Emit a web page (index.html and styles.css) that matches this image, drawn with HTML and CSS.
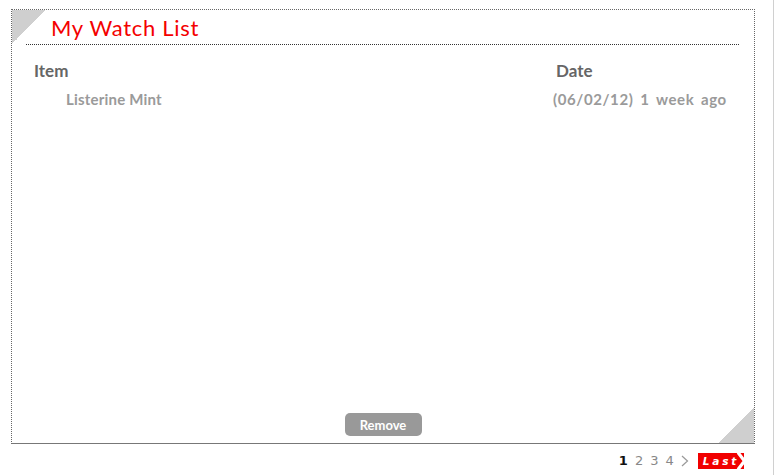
FILE: index.html
```html
<!DOCTYPE html>
<html lang="en">
<head>
<meta charset="utf-8">
<title>My Watch List</title>
<link rel="stylesheet" href="styles.css">
</head>
<body>
<div class="page">
  <section class="panel">
    <header class="panel-head">
      <h1 class="panel-title">My Watch List</h1>
    </header>
    <div class="list">
      <div class="list-row list-head">
        <span class="col-item">Item</span>
        <span class="col-date">Date</span>
      </div>
      <div class="list-row list-entry">
        <span class="col-item">Listerine Mint</span>
        <span class="col-date">(06/02/12) 1 week ago</span>
      </div>
    </div>
    <div class="actions">
      <button class="btn-remove" type="button">Remove</button>
    </div>
  </section>
  <nav class="pager">
    <span class="pg pg-current">1</span>
    <span class="pg">2</span>
    <span class="pg">3</span>
    <span class="pg">4</span>
    <svg class="pg-next" width="8" height="12" viewBox="0 0 8 12"><polyline points="1,1 6.5,6 1,11" fill="none" stroke="#999" stroke-width="1.2"/></svg>
    <span class="pg-last"><span class="pg-last-text">Last</span><svg class="pg-chev" width="11" height="18" viewBox="0 0 11 18"><polyline points="2,0.5 8.5,9 2,17.5" fill="none" stroke="#fff" stroke-width="3.2"/></svg></span>
  </nav>
</div>
</body>
</html>
```

FILE: styles.css
```css
html, body {
  margin: 0;
  padding: 0;
  background: #fff;
}

.page {
  width: 774px;
  height: 475px;
  border-right: 1px solid #d0d0d0;
  box-sizing: border-box;
  padding: 9px 0 0 11px;
  display: flex;
  flex-direction: column;
}

.panel {
  width: 744px;
  height: 435px;
  box-sizing: border-box;
  border: 1px dotted #666;
  border-bottom: 1px solid #777;
  display: flex;
  flex-direction: column;
  background:
    linear-gradient(to bottom right, #cfcfcf 50%, transparent 50%) left top / 34px 34px no-repeat,
    linear-gradient(to top left, #cfcfcf 50%, transparent 50%) right bottom / 35px 36px no-repeat,
    #fff;
}

.panel-head {
  margin: 0 15px 0 14px;
  height: 34px;
  border-bottom: 1px dotted #333;
  display: flex;
  align-items: center;
}

.panel-title {
  margin: 0 0 0 25px;
  font-family: "Lato", "DejaVu Sans", sans-serif;
  font-weight: 400;
  font-size: 22px;
  letter-spacing: 0.7px;
  color: #f40000;
  line-height: 1;
  padding-top: 1px;
}

.list {
  flex: 1;
  padding: 15px 24px 0 22px;
  font-family: "Lato", "Open Sans", sans-serif;
}

.list-row {
  display: grid;
  grid-template-columns: 1fr 177px;
  align-items: center;
}

.list-head {
  height: 20px;
  font-size: 17px;
  font-weight: 700;
  color: #666;
}

.list-entry {
  height: 20px;
  margin-top: 9px;
  font-size: 15px;
  font-weight: 700;
  color: #9a9a9a;
}

.list-head .col-date {
  padding-left: 3px;
}

.list-entry .col-item {
  padding-left: 32px;
  letter-spacing: 0.2px;
}

.list-entry .col-date {
  letter-spacing: 0.6px;
  word-spacing: 2.5px;
  white-space: nowrap;
}

.actions {
  display: flex;
  justify-content: center;
  padding-bottom: 7px;
}

.btn-remove {
  width: 77px;
  height: 23px;
  border: 0;
  border-radius: 5px;
  background: #999;
  color: #fff;
  font-family: "Lato", "Open Sans", sans-serif;
  font-weight: 700;
  font-size: 13px;
  padding: 0;
}

.pager {
  width: 736px;
  margin-top: 9px;
  display: flex;
  justify-content: flex-end;
  align-items: center;
  font-family: "DejaVu Sans", sans-serif;
  font-size: 13px;
  color: #888;
  gap: 7px;
}

.pg {
  line-height: 16px;
}

.pg-current {
  color: #111;
  font-weight: 700;
}

.pg-next {
  margin-right: 2px;
}

.pg-last {
  display: flex;
  align-items: center;
  height: 16px;
  padding-left: 5px;
  background: linear-gradient(to right, #f10000 calc(100% - 3px), transparent calc(100% - 3px));
  color: #fff;
  font-family: "DejaVu Sans", sans-serif;
  font-style: italic;
  font-weight: 700;
  font-size: 10.5px;
  letter-spacing: 2.8px;
  white-space: nowrap;
}

.pg-last-text {
  line-height: 16px;
}

.pg-chev {
  flex: none;
  margin-left: -3px;
}
```
